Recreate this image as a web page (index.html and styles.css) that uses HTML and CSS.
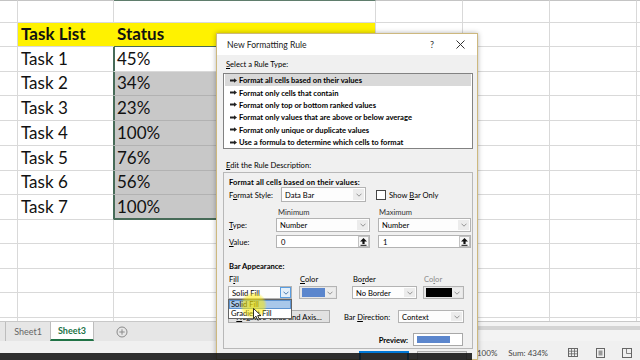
FILE: index.html
```html
<!DOCTYPE html>
<html>
<head>
<meta charset="utf-8">
<title>New Formatting Rule</title>
<link rel="stylesheet" href="styles.css">
</head>
<body>
<div class="app">
  <div class="sheet">
    <div class="c top"></div><div class="c top"></div><div class="c top topsel"></div><div class="c top"></div><div class="c top"></div><div class="c top"></div><div class="c top"></div>
    <div class="c"></div><div class="c hd">Task List</div><div class="c hd hdc">Status</div><div class="c"></div><div class="c"></div><div class="c"></div><div class="c"></div>
    <div class="c"></div><div class="c sb">Task 1</div><div class="c act">45%</div><div class="c"></div><div class="c"></div><div class="c"></div><div class="c"></div>
    <div class="c"></div><div class="c sb">Task 2</div><div class="c sel">34%</div><div class="c"></div><div class="c"></div><div class="c"></div><div class="c"></div>
    <div class="c"></div><div class="c sb">Task 3</div><div class="c sel">23%</div><div class="c"></div><div class="c"></div><div class="c"></div><div class="c"></div>
    <div class="c"></div><div class="c sb">Task 4</div><div class="c sel">100%</div><div class="c"></div><div class="c"></div><div class="c"></div><div class="c"></div>
    <div class="c"></div><div class="c sb">Task 5</div><div class="c sel">76%</div><div class="c"></div><div class="c"></div><div class="c"></div><div class="c"></div>
    <div class="c"></div><div class="c sb">Task 6</div><div class="c sel">56%</div><div class="c"></div><div class="c"></div><div class="c"></div><div class="c"></div>
    <div class="c"></div><div class="c sb">Task 7</div><div class="c sel last">100%</div><div class="c"></div><div class="c"></div><div class="c"></div><div class="c"></div>
    <div class="c"></div><div class="c"></div><div class="c"></div><div class="c"></div><div class="c"></div><div class="c"></div><div class="c"></div>
    <div class="c"></div><div class="c"></div><div class="c"></div><div class="c"></div><div class="c"></div><div class="c"></div><div class="c"></div>
    <div class="c"></div><div class="c"></div><div class="c"></div><div class="c"></div><div class="c"></div><div class="c"></div><div class="c"></div>
    <div class="c"></div><div class="c"></div><div class="c"></div><div class="c"></div><div class="c"></div><div class="c"></div><div class="c"></div>
    <div class="c"></div><div class="c"></div><div class="c"></div><div class="c"></div><div class="c"></div><div class="c"></div><div class="c"></div>
  </div>
  <div class="tabs">
    <div class="tab">Sheet1</div>
    <div class="tab on">Sheet3</div>
    <div class="add"><svg width="12" height="12" viewBox="0 0 12 12"><circle cx="6" cy="6" r="5" fill="none" stroke="#8a8a8a" stroke-width="1"/><path d="M6 3.3V8.7M3.3 6H8.7" stroke="#8a8a8a" stroke-width="1"/></svg></div>
    <div class="hscroll"><div class="thumb"></div></div>
  </div>
  <div class="status">
    <span>Average: 62%</span>
    <span class="si">Count: 7</span>
    <span class="si">Max: 100%</span>
    <span class="si2">Sum: 434%</span>
    <svg class="ic1" width="10" height="9" viewBox="0 0 10 9"><rect x="0.5" y="0.5" width="9" height="8" fill="none" stroke="#666"/><path d="M3.5 0.5V8.5M6.5 0.5V8.5M0.5 3.2H9.5M0.5 5.8H9.5" stroke="#666" stroke-width="0.8"/></svg>
    <svg class="ic2" width="9" height="10" viewBox="0 0 9 10"><rect x="0.5" y="0.5" width="8" height="9" fill="none" stroke="#666"/><rect x="2.5" y="2.5" width="4" height="5" fill="#999"/></svg>
    <svg class="ic3" width="10" height="10" viewBox="0 0 10 10"><rect x="0.5" y="0.5" width="9" height="9" fill="none" stroke="#666"/><path d="M4.5 0.5V5.5H9.5" fill="none" stroke="#666" stroke-width="0.8"/></svg>
  </div>
</div>

<div class="dlg">
  <div class="tb">
    <span class="ttl">New Formatting Rule</span>
    <span class="help">?</span>
    <svg class="x" width="9" height="9" viewBox="0 0 9 9"><path d="M0.5 0.5L8.5 8.5M8.5 0.5L0.5 8.5" stroke="#333" stroke-width="1"/></svg>
  </div>
  <div class="db">
    <div class="lbl l1"><u>S</u>elect a Rule Type:</div>
    <div class="list">
      <div class="it on"><svg width="7" height="5" viewBox="0 0 7 5"><path d="M0 1.6H4V0.3L7 2.5L4 4.7V3.4H0Z" fill="#222"/></svg>Format all cells based on their values</div>
      <div class="it"><svg width="7" height="5" viewBox="0 0 7 5"><path d="M0 1.6H4V0.3L7 2.5L4 4.7V3.4H0Z" fill="#222"/></svg>Format only cells that contain</div>
      <div class="it"><svg width="7" height="5" viewBox="0 0 7 5"><path d="M0 1.6H4V0.3L7 2.5L4 4.7V3.4H0Z" fill="#222"/></svg>Format only top or bottom ranked values</div>
      <div class="it"><svg width="7" height="5" viewBox="0 0 7 5"><path d="M0 1.6H4V0.3L7 2.5L4 4.7V3.4H0Z" fill="#222"/></svg>Format only values that are above or below average</div>
      <div class="it"><svg width="7" height="5" viewBox="0 0 7 5"><path d="M0 1.6H4V0.3L7 2.5L4 4.7V3.4H0Z" fill="#222"/></svg>Format only unique or duplicate values</div>
      <div class="it"><svg width="7" height="5" viewBox="0 0 7 5"><path d="M0 1.6H4V0.3L7 2.5L4 4.7V3.4H0Z" fill="#222"/></svg>Use a formula to determine which cells to format</div>
    </div>
    <div class="lbl l2"><u>E</u>dit the Rule Description:</div>
    <div class="panel">
      <div class="h1">Format all cells based on their values:</div>
      <div class="style">
        <span class="fl">F<u>o</u>rmat Style:</span>
        <div class="dd w85"><span>Data Bar</span><i class="arr"><svg width="6" height="4" viewBox="0 0 6 4"><path d="M0.5 0.7L3 3.2L5.5 0.7" fill="none" stroke="#8a8a8a" stroke-width="0.9"/></svg></i></div>
        <span class="cb"></span><span>Show <u>B</u>ar Only</span>
      </div>
      <div class="grid mm"><span></span><span class="mn">Minimum</span><span class="mx">Maximum</span></div>
      <div class="grid ty">
        <span><u>T</u>ype:</span>
        <div class="dd"><span>Number</span><i class="arr"><svg width="6" height="4" viewBox="0 0 6 4"><path d="M0.5 0.7L3 3.2L5.5 0.7" fill="none" stroke="#8a8a8a" stroke-width="0.9"/></svg></i></div>
        <div class="dd"><span>Number</span><i class="arr"><svg width="6" height="4" viewBox="0 0 6 4"><path d="M0.5 0.7L3 3.2L5.5 0.7" fill="none" stroke="#8a8a8a" stroke-width="0.9"/></svg></i></div>
      </div>
      <div class="grid va">
        <span><u>V</u>alue:</span>
        <div class="in"><span>0</span><i class="up"><svg width="7" height="8" viewBox="0 0 7 8"><path d="M3.5 0L7 3.6H4.6V6H2.4V3.6H0Z" fill="#111"/><rect x="0.5" y="6.8" width="6" height="1" fill="#111"/></svg></i></div>
        <div class="in"><span>1</span><i class="up"><svg width="7" height="8" viewBox="0 0 7 8"><path d="M3.5 0L7 3.6H4.6V6H2.4V3.6H0Z" fill="#111"/><rect x="0.5" y="6.8" width="6" height="1" fill="#111"/></svg></i></div>
      </div>
      <div class="h2">Bar Appearance:</div>
      <div class="bars">
        <div class="col c1"><span>F<u>i</u>ll</span><div class="dd"><span>Solid Fill</span><i class="arr hl"><svg width="6" height="4" viewBox="0 0 6 4"><path d="M0.5 0.7L3 3.2L5.5 0.7" fill="none" stroke="#3a6fa8" stroke-width="0.9"/></svg></i></div></div>
        <div class="col c2"><span><u>C</u>olor</span><div class="clr"><i class="sw"></i><i class="arr"><svg width="6" height="4" viewBox="0 0 6 4"><path d="M0.5 0.7L3 3.2L5.5 0.7" fill="none" stroke="#8a8a8a" stroke-width="0.9"/></svg></i></div></div>
        <div class="col c3"><span>Bo<u>r</u>der</span><div class="dd"><span>No Border</span><i class="arr"><svg width="6" height="4" viewBox="0 0 6 4"><path d="M0.5 0.7L3 3.2L5.5 0.7" fill="none" stroke="#8a8a8a" stroke-width="0.9"/></svg></i></div></div>
        <div class="col c4"><span class="dim">Co<u>l</u>or</span><div class="clr"><i class="sw k"></i><i class="arr"><svg width="6" height="4" viewBox="0 0 6 4"><path d="M0.5 0.7L3 3.2L5.5 0.7" fill="none" stroke="#8a8a8a" stroke-width="0.9"/></svg></i></div></div>
      </div>
      <div class="r3">
        <div class="btn neg"><u>N</u>egative Value and Axis...</div>
        <span class="bdl">Bar <u>D</u>irection:</span>
        <div class="dd ctx"><span>Context</span><i class="arr"><svg width="6" height="4" viewBox="0 0 6 4"><path d="M0.5 0.7L3 3.2L5.5 0.7" fill="none" stroke="#8a8a8a" stroke-width="0.9"/></svg></i></div>
      </div>
      <div class="pv"><span class="pvl">Preview:</span><div class="pbox"><i></i></div></div>
    </div>
    <div class="btns"><div class="btn ok"></div><div class="btn"></div></div>
  </div>
  <div class="pop"><div class="pi on">Solid Fill</div><div class="pi">Gradient Fill</div></div>
  <div class="glow"></div>
  <svg class="cur" width="9" height="13" viewBox="0 0 9 13"><path d="M0.5 0.5V10.5L3 8.2L4.8 12.2L6.4 11.5L4.7 7.6H8Z" fill="#fff" stroke="#000" stroke-width="0.8" stroke-linejoin="round"/></svg>
</div>
<div class="shade"></div>
</body>
</html>
```

FILE: styles.css
```css
* { box-sizing: border-box; margin: 0; padding: 0; }
html, body { width: 640px; height: 360px; overflow: hidden; }
body { position: relative; background: #fff; font-family: Lato, "Liberation Sans", sans-serif; color: #111; }
i { font-style: normal; }

.app { display: flex; flex-direction: column; height: 360px; }

.sheet {
  flex: none;
  height: 321px;
  overflow: hidden;
  display: grid;
  grid-template-columns: 18px 96px 262px 87px 87px 87px 40px;
  grid-template-rows: 23px 24px 25px 24px 25px 25px 25px 24px 25px 24px 25px 24px 25px 25px;
}
.c {
  border-right: 1px solid #d9d9d9;
  border-bottom: 1px solid #d9d9d9;
  display: flex;
  align-items: flex-end;
  padding: 0 0 2px 3px;
  font-size: 17px;
  line-height: 20px;
  white-space: nowrap;
  overflow: hidden;
}
.top { border-top: 1px solid #c4c4c4; }
.topsel { border-top-color: #5f7d6c; }
.hd { background: #fff200; font-weight: 700; border-right-color: #fff200; }
.hdc { border-right-color: #d9d9d9; border-bottom-color: #476b58; }
.sb { border-right-color: #476b58; }
.act { box-shadow: inset 1px 0 #476b58; }
.sel { background: #c8c8c8; border-bottom-color: #b2b2b2; box-shadow: inset 1px 0 #476b58; }
.sel.last { border-bottom-color: #476b58; box-shadow: inset 1px 0 #476b58, inset 0 -1px #476b58; }

.tabs {
  flex: none;
  height: 20px;
  display: flex;
  background: #e6e6e6;
  border-top: 1px solid #c8c8c8;
  padding-left: 5px;
  font-size: 9px;
}
.tab {
  width: 45px;
  border-left: 1px solid #bdbdbd;
  display: flex;
  align-items: center;
  justify-content: center;
  color: #666;
}
.tab.on {
  width: 44px;
  background: #fff;
  color: #217346;
  font-weight: 700;
  border-right: 1px solid #bdbdbd;
  border-bottom: 2px solid #217346;
}
.add { margin-left: 22px; display: flex; align-items: center; }
.hscroll { margin-left: auto; width: 300px; background: #f3f3f3; padding-top: 4px; }
.thumb { height: 4px; background: #d4d4d4; }

.status {
  flex: none;
  height: 19px;
  background: #f0f0f0;
  display: flex;
  align-items: center;
  justify-content: flex-end;
  padding: 4px 8px 0 0;
  font-size: 8px;
  color: #444;
}
.si { margin-left: 8px; }
.si2 { margin-left: 11px; }
.ic1 { margin-left: 20px; }
.ic2 { margin-left: 18px; }
.ic3 { margin-left: 17px; }

.shade { position: absolute; left: 0; bottom: 0; width: 472px; height: 7px; background: rgba(18, 18, 18, 0.88); }

/* dialog */
.dlg {
  position: absolute;
  left: 216px;
  top: 33px;
  width: 262px;
  bottom: 0;
  border: 1px solid #cdb87e;
  background: #f0f0f0;
  box-shadow: 0 0 5px rgba(0, 0, 0, 0.3);
  font-size: 7.6px;
  color: #000;
}
.tb { height: 21px; background: #fff; display: flex; align-items: center; padding-left: 10px; }
.ttl { font-size: 8.6px; color: #222; }
.help { margin-left: auto; width: 10px; text-align: center; font-size: 9px; color: #333; }
.x { margin-left: 19px; margin-right: 12px; }
.db { padding: 0 4px 0 6px; }
.lbl { height: 10px; line-height: 10px; margin-left: 3px; }
.l1 { margin-top: 4px; }
.l2 { margin-top: 11px; }
.list { margin-top: 4px; height: 76px; border: 1px solid #828282; background: #fff; padding: 0 1px; }
.it { height: 12.4px; display: flex; align-items: center; padding-left: 5px; font-weight: 700; white-space: nowrap; }
.it svg { margin-right: 2px; }
.it.on { background: #d9d9d9; }

.panel { margin-top: 2px; border: 1px solid #b8b8b8; padding: 4px 8px 2px 5px; }
.h1, .h2 { height: 10px; line-height: 10px; font-weight: 700; }
.h1 { letter-spacing: 0.15px; }
.h2 { margin-top: 13px; }
.style { display: flex; align-items: center; height: 15px; }
.fl { width: 52px; }
.dd {
  display: flex;
  align-items: center;
  height: 100%;
  border: 1px solid #b3b3b3;
  background: #fdfdfd;
  padding-left: 3px;
  white-space: nowrap;
}
.arr {
  margin-left: auto;
  width: 11px;
  height: calc(100% - 2px);
  margin-right: 1px;
  background: #ececec;
  display: flex;
  align-items: center;
  justify-content: center;
}
.arr.hl { border: 1px solid #5a9de0; background: #e3effa; height: 100%; margin-right: 0; }
.w85 { width: 85px; }
.cb { width: 10px; height: 10px; border: 1px solid #444; background: #fff; margin: 0 3px 0 10px; }
.grid { display: grid; grid-template-columns: 39px 94px 93px; column-gap: 8px; align-items: center; }
.mm { margin-top: 5px; height: 10px; line-height: 10px; color: #333; }
.mn { padding-left: 2px; }
.mx { padding-left: 1px; }
.ty { margin-top: 1px; height: 14px; }
.va { margin-top: 3px; height: 13px; }
.in { display: flex; align-items: center; height: 13px; border: 1px solid #b3b3b3; background: #fff; padding-left: 4px; }
.up {
  margin-left: auto;
  width: 11px;
  height: 11px;
  border: 1px solid #c2c2c2;
  background: #f6f6f6;
  display: flex;
  align-items: center;
  justify-content: center;
}

.bars { display: flex; margin-top: 3px; margin-left: -1px; }
.col { display: flex; flex-direction: column; }
.col > span { height: 10px; line-height: 10px; margin-bottom: 2px; padding-left: 1px; }
.col .dd, .col .clr { height: 13px; }
.c1 { width: 64px; }
.c2 { width: 38px; margin-left: 7px; }
.c3 { width: 65px; margin-left: 15px; }
.c4 { width: 41px; margin-left: 6px; }
.dim { color: #8a8a8a; }
.clr { display: flex; align-items: center; border: 1px solid #b3b3b3; background: #e6e6e6; padding-left: 2px; }
.sw { width: 24px; height: 9px; background: #5b86cd; }
.sw.k { width: 27px; background: #000; }

.r3 { display: flex; align-items: center; height: 13px; margin-top: 11px; margin-left: -1px; }
.btn {
  display: flex;
  align-items: center;
  justify-content: center;
  height: 13px;
  border: 1px solid #adadad;
  background: #e1e1e1;
  white-space: nowrap;
}
.neg { width: 102px; }
.bdl { width: 54px; margin-left: 14px; }
.ctx { width: 66px; }
.pv { display: flex; justify-content: flex-end; align-items: center; height: 13px; margin-top: 10px; padding-right: 1px; }
.pvl { font-weight: 700; margin-right: 5px; }
.pbox { width: 50px; height: 13px; border: 1px solid #a8a8a8; background: #fff; padding: 2px 3px; }
.pbox i { display: block; width: 33px; height: 100%; background: #5b86cd; }

.btns { display: flex; justify-content: flex-end; gap: 8px; margin-top: 2px; padding-right: 6px; }
.btns .btn { width: 50px; height: 20px; }
.btns .ok { border: 2px solid #0078d7; }

.pop {
  position: absolute;
  left: 11px;
  top: 265px;
  width: 64px;
  height: 20px;
  border: 1px solid #646464;
  background: #fff;
}
.pi { height: 9px; line-height: 9px; padding-left: 2px; }
.pi.on { background: #a9c8ea; box-shadow: inset 0 0 0 1px #5c93d1; }
.glow {
  position: absolute;
  left: 23px;
  top: 258px;
  width: 27px;
  height: 27px;
  border-radius: 50%;
  background: radial-gradient(circle, rgba(255, 236, 0, 0.7) 0%, rgba(255, 236, 0, 0.5) 55%, rgba(255, 236, 0, 0) 72%);
}
.cur { position: absolute; left: 36px; top: 274px; }
```
